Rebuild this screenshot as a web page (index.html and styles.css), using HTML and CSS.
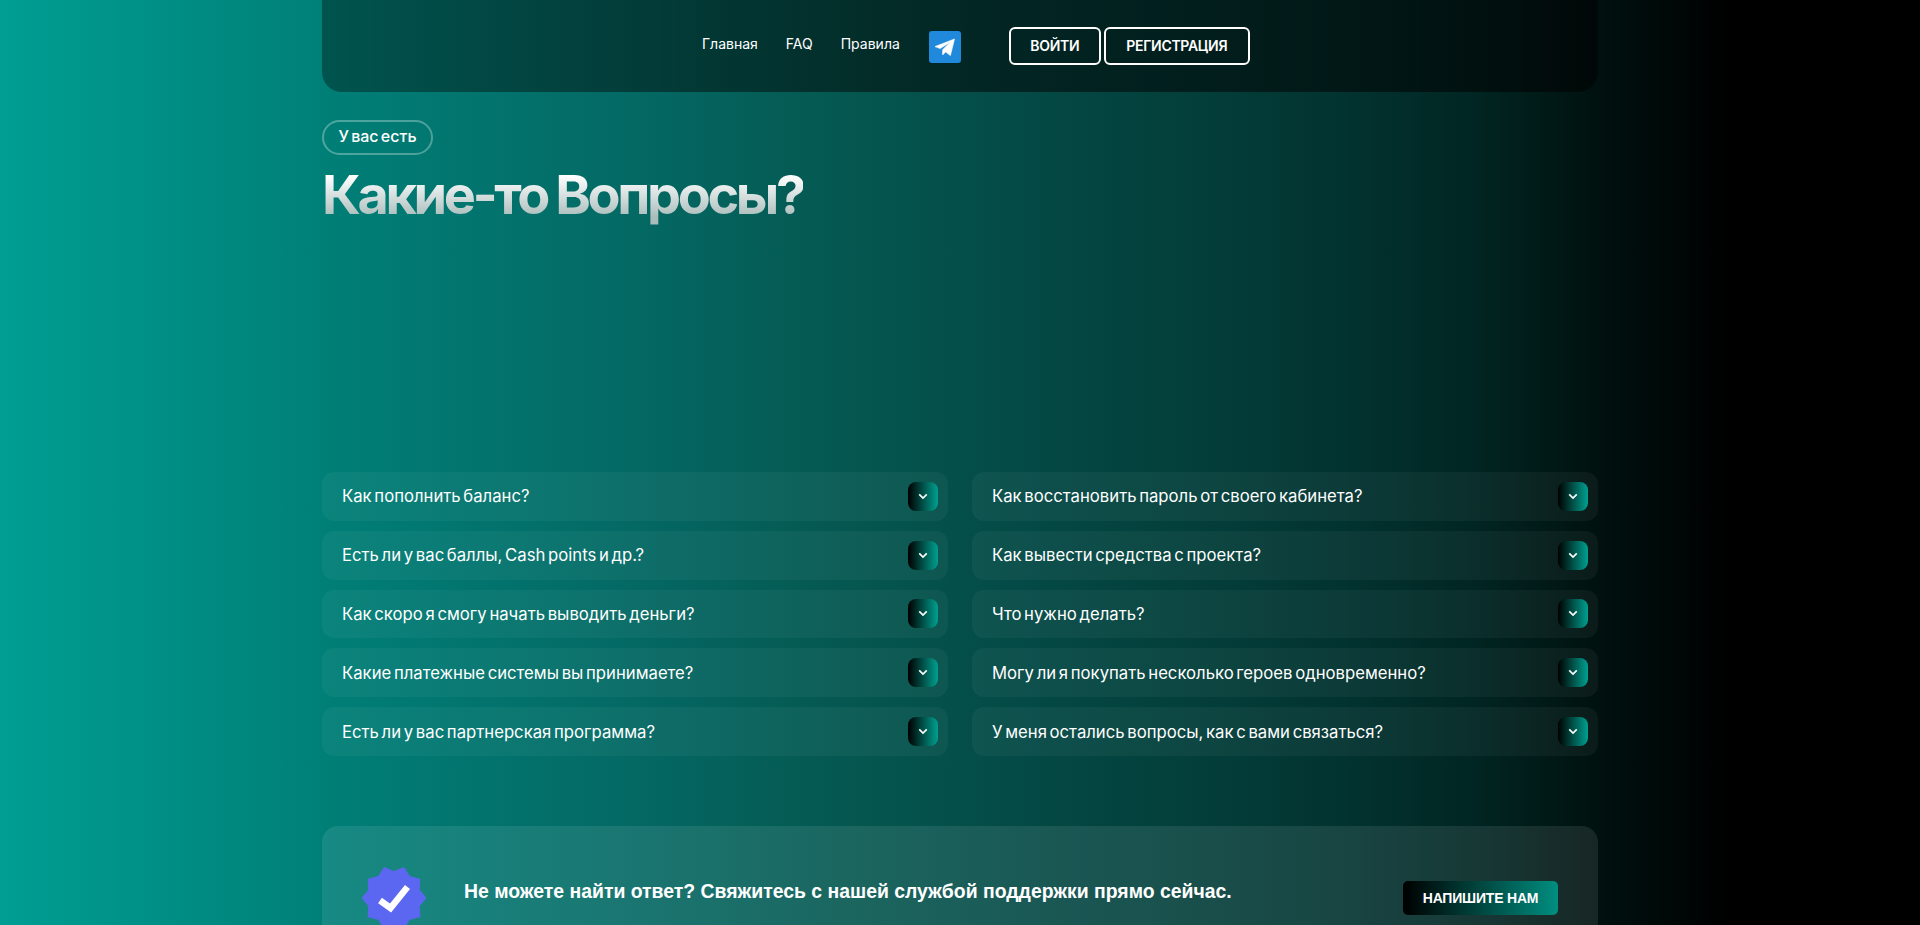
FILE: index.html
```html
<!DOCTYPE html>
<html lang="ru">
<head>
<meta charset="utf-8">
<title>FAQ</title>
<link rel="stylesheet" href="styles.css">
</head>
<body>
<div class="page">
  <header class="topbar">
    <nav class="nav">
      <a class="nav-link">Главная</a>
      <a class="nav-link">FAQ</a>
      <a class="nav-link">Правила</a>
      <a class="tg">
        <svg viewBox="0 0 32 32" width="32" height="32"><path d="M25.5 8 L6 15.6 L11.2 17.6 L21.5 11 L13.6 18.7 L13.6 24 L16.6 20.9 L21.4 24.6 Z" fill="#fff" stroke="#fff" stroke-width=".6" stroke-linejoin="round"/></svg>
      </a>
    </nav>
    <div class="auth">
      <a class="btn-outline login">ВОЙТИ</a>
      <a class="btn-outline register">РЕГИСТРАЦИЯ</a>
    </div>
  </header>

  <section class="intro">
    <span class="pill">У вас есть</span>
    <h1 class="title">Какие-то Вопросы?</h1>
  </section>

  <section class="faq">
    <div class="faq-item"><span>Как пополнить баланс?</span><i class="chev"><svg viewBox="0 0 12 8" width="10" height="7"><path d="M1.5 1.5 L6 6 L10.5 1.5"/></svg></i></div>
    <div class="faq-item"><span>Как восстановить пароль от своего кабинета?</span><i class="chev"><svg viewBox="0 0 12 8" width="10" height="7"><path d="M1.5 1.5 L6 6 L10.5 1.5"/></svg></i></div>
    <div class="faq-item"><span>Есть ли у вас баллы, Cash points и др.?</span><i class="chev"><svg viewBox="0 0 12 8" width="10" height="7"><path d="M1.5 1.5 L6 6 L10.5 1.5"/></svg></i></div>
    <div class="faq-item"><span>Как вывести средства с проекта?</span><i class="chev"><svg viewBox="0 0 12 8" width="10" height="7"><path d="M1.5 1.5 L6 6 L10.5 1.5"/></svg></i></div>
    <div class="faq-item"><span>Как скоро я смогу начать выводить деньги?</span><i class="chev"><svg viewBox="0 0 12 8" width="10" height="7"><path d="M1.5 1.5 L6 6 L10.5 1.5"/></svg></i></div>
    <div class="faq-item"><span>Что нужно делать?</span><i class="chev"><svg viewBox="0 0 12 8" width="10" height="7"><path d="M1.5 1.5 L6 6 L10.5 1.5"/></svg></i></div>
    <div class="faq-item"><span>Какие платежные системы вы принимаете?</span><i class="chev"><svg viewBox="0 0 12 8" width="10" height="7"><path d="M1.5 1.5 L6 6 L10.5 1.5"/></svg></i></div>
    <div class="faq-item"><span>Могу ли я покупать несколько героев одновременно?</span><i class="chev"><svg viewBox="0 0 12 8" width="10" height="7"><path d="M1.5 1.5 L6 6 L10.5 1.5"/></svg></i></div>
    <div class="faq-item"><span>Есть ли у вас партнерская программа?</span><i class="chev"><svg viewBox="0 0 12 8" width="10" height="7"><path d="M1.5 1.5 L6 6 L10.5 1.5"/></svg></i></div>
    <div class="faq-item"><span>У меня остались вопросы, как с вами связаться?</span><i class="chev"><svg viewBox="0 0 12 8" width="10" height="7"><path d="M1.5 1.5 L6 6 L10.5 1.5"/></svg></i></div>
  </section>

  <section class="support">
    <svg class="badge" viewBox="-33 -33 66 66" width="66" height="66">
      <path fill="#5b67f0" stroke="#5b67f0" stroke-width="1" stroke-linejoin="round" d="M32 0 L25.2 8.19 L25.89 18.81 L15.58 21.44 L9.89 30.43 L0 26.5 L-9.89 30.43 L-15.58 21.44 L-25.89 18.81 L-25.2 8.19 L-32 0 L-25.2 -8.19 L-25.89 -18.81 L-15.58 -21.44 L-9.89 -30.43 L0 -26.5 L9.89 -30.43 L15.58 -21.44 L25.89 -18.81 L25.2 -8.19 Z"/>
      <path fill="none" stroke="#fff" stroke-width="6.5" d="M-14 2.5 L-3.5 10 L13.5 -11"/>
    </svg>
    <p class="support-text">Не можете найти ответ? Свяжитесь с нашей службой поддержки прямо сейчас.</p>
    <a class="btn-write">НАПИШИТЕ НАМ</a>
  </section>
</div>
</body>
</html>
```
FILE: styles.css
```css
html, body {
  margin: 0;
  height: 925px;
  overflow: hidden;
}
body {
  background: linear-gradient(90deg, #009e93 0%, #007f77 17%, #046a65 32%, #05564f 45%, #044a46 53%, #033c38 64%, #023330 70%, #012522 77%, #001210 83%, #000 90%, #000 100%);
  color: #fff;
  font-family: Inter, "Noto Sans", sans-serif;
}
.page {
  width: 1276px;
  margin: 0 auto;
  height: 925px;
  overflow: hidden;
}
.topbar {
  height: 92px;
  border-radius: 0 0 20px 20px;
  background: linear-gradient(90deg, rgba(0, 0, 0, 0.34) 0%, rgba(0, 0, 0, 0.5) 50%, rgba(0, 0, 0, 0.55) 100%);
  display: flex;
  align-items: center;
  padding-left: 380px;
  box-sizing: border-box;
}
.nav {
  display: flex;
  align-items: center;
}
.nav-link {
  font-size: 14px;
  margin-right: 28px;
  position: relative;
  top: -3px;
}
.tg {
  width: 32px;
  height: 32px;
  border-radius: 3px;
  background: #2189dc;
  display: flex;
  margin-left: 1px;
  position: relative;
  top: 1px;
}
.auth {
  display: flex;
  gap: 3px;
  margin-left: 48px;
}
.btn-outline {
  height: 38px;
  box-sizing: border-box;
  border: 2px solid #fff;
  border-radius: 6px;
  padding: 0 0 2px;
  font-size: 14px;
  font-weight: 600;
  letter-spacing: -0.3px;
  display: flex;
  align-items: center;
  justify-content: center;
}
.login {
  width: 92px;
}
.register {
  width: 146px;
}
.intro {
  margin-top: 28px;
  height: 352px;
}
.pill {
  display: inline-flex;
  align-items: center;
  height: 35px;
  box-sizing: border-box;
  padding: 0 14.5px 3px;
  border: 2px solid rgba(255, 255, 255, 0.3);
  border-radius: 18px;
  font-size: 16px;
  font-weight: 500;
  word-spacing: -2px;
}
.title {
  margin: 8px 0 0;
  font-size: 54px;
  line-height: 64px;
  font-weight: 700;
  letter-spacing: -3.4px;
  word-spacing: -1px;
  background: linear-gradient(180deg, #fff 20%, #a9bdbb 85%);
  -webkit-background-clip: text;
  background-clip: text;
  color: transparent;
  width: max-content;
}
.faq {
  display: grid;
  grid-template-columns: 626px 626px;
  column-gap: 24px;
  row-gap: 10px;
}
.faq-item {
  height: 48.8px;
  border-radius: 12px;
  background: rgba(255, 255, 255, 0.045);
  display: flex;
  align-items: center;
  justify-content: space-between;
  padding: 0 10px 0 20px;
  font-size: 16.7px;
  font-weight: 430;
  word-spacing: -2px;
}
.chev {
  width: 30px;
  height: 29px;
  border-radius: 8px;
  background: linear-gradient(90deg, #000 0%, #00a090 100%);
  display: flex;
  align-items: center;
  justify-content: center;
}
.chev path {
  fill: none;
  stroke: #fff;
  stroke-width: 2;
}
.support {
  margin-top: 70px;
  height: 99px;
  border-radius: 16px 16px 0 0;
  background: rgba(255, 255, 255, 0.09);
  display: flex;
  align-items: flex-start;
  padding: 39px 40px 0 39px;
  box-sizing: border-box;
}
.badge {
  flex: none;
  margin-right: 37px;
}
.support-text {
  margin: 10px 0 0;
  flex: 1;
  font-family: "Liberation Sans", Arial, sans-serif;
  font-weight: 700;
  font-size: 19.4px;
  line-height: 32px;
}
.btn-write {
  margin-top: 16px;
  width: 155px;
  height: 34px;
  border-radius: 5px;
  background: linear-gradient(90deg, #000 0%, #008e80 100%);
  display: flex;
  align-items: center;
  justify-content: center;
  font-family: "Liberation Sans", Arial, sans-serif;
  font-weight: 700;
  font-size: 14px;
  letter-spacing: -0.2px;
}
```
